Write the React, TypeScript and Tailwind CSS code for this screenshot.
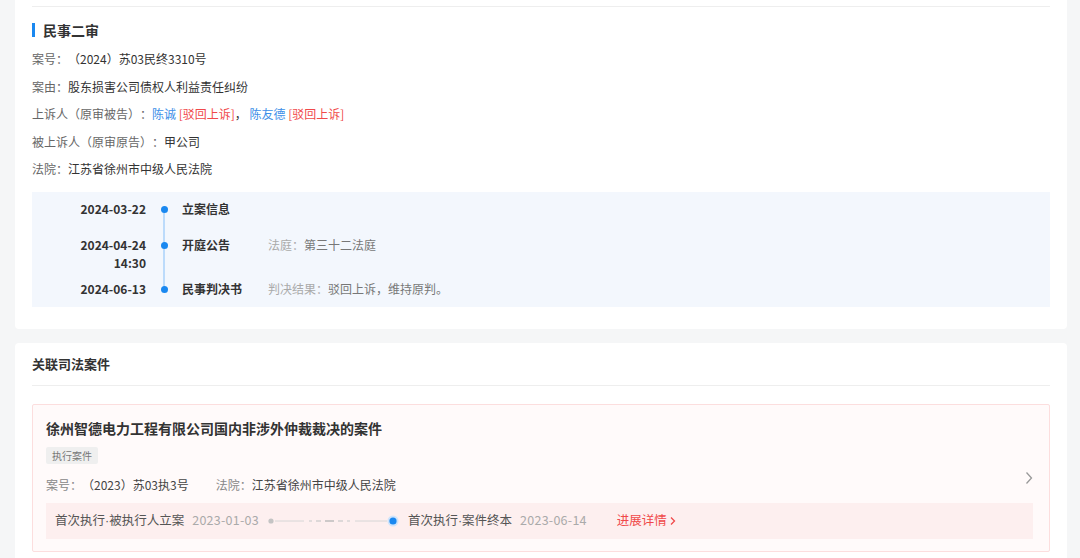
import React from "react";

const font = { fontFamily: '"Noto Sans CJK SC", "Noto Sans", sans-serif' };

function InfoLine({ label, children }: { label: string; children: React.ReactNode }) {
  return (
    <div className="leading-[27.5px] text-[12px] text-[#333]">
      <span className="text-[#666]">{label}</span>
      {children}
    </div>
  );
}

function TimelineRow({
  date,
  time,
  title,
  label,
  value,
  h,
  first,
  last,
}: {
  date: string;
  time?: string;
  title: string;
  label?: string;
  value?: string;
  h: string;
  first?: boolean;
  last?: boolean;
}) {
  return (
    <div className={`flex ${h}`}>
      <div className="w-[114px] text-right text-[12px] font-bold text-[#333] leading-[18px]">
        <div>{date}</div>
        {time && <div>{time}</div>}
      </div>
      <div className="relative w-[36px] flex justify-center">
        <div
          className={`absolute left-1/2 -translate-x-1/2 w-[2px] bg-[#bcdbfb] ${first ? "top-[9px]" : "top-0"} ${last ? "h-[9px]" : "bottom-0"}`}
        />
        <div className="relative mt-[6px] w-[7px] h-[7px] rounded-full bg-[#1a88f0]" />
      </div>
      <div className="w-[86px] text-[12px] font-bold text-[#333] leading-[18px]">{title}</div>
      {label && (
        <div className="text-[12px] leading-[18px]">
          <span className="text-[#aaa]">{label}</span>
          <span className="text-[#777]">{value}</span>
        </div>
      )}
    </div>
  );
}

function ProgressLine() {
  return (
    <svg width="134" height="14" viewBox="0 0 134 14" className="ml-[6px] mr-[9px]">
      <circle cx="6" cy="7" r="2.6" fill="#c4c4c4" />
      <line x1="10" y1="7" x2="39" y2="7" stroke="#d6d6d6" strokeWidth="1" />
      <line x1="44" y1="7" x2="47" y2="7" stroke="#cfcfcf" strokeWidth="1.2" />
      <line x1="51" y1="7" x2="56" y2="7" stroke="#c8c8c8" strokeWidth="1.2" />
      <line x1="60" y1="7" x2="69" y2="7" stroke="#bdbdbd" strokeWidth="1.5" />
      <line x1="73" y1="7" x2="78" y2="7" stroke="#c8c8c8" strokeWidth="1.2" />
      <line x1="82" y1="7" x2="85" y2="7" stroke="#cfcfcf" strokeWidth="1.2" />
      <line x1="90" y1="7" x2="122" y2="7" stroke="#d6d6d6" strokeWidth="1" />
      <circle cx="128" cy="7" r="5.5" fill="#cfe4fb" />
      <circle cx="128" cy="7" r="3.6" fill="#1a88f0" />
    </svg>
  );
}

function Dot() {
  return <span style={{ fontFamily: '"Liberation Sans", sans-serif' }}>·</span>;
}

export default function App() {
  return (
    <div
      style={font}
      className="w-[1080px] h-[558px] overflow-hidden bg-[#f5f6f7] pl-[15px] pr-[13px] [text-spacing-trim:space-all]"
    >
      {/* Card 1 */}
      <div className="bg-white rounded-b-[4px] px-[17px] pb-[22px]">
        <div className="h-[7px] border-b border-[#eeeeee]" />
        <div className="mt-[13px] flex items-center h-[20px]">
          <div className="w-[3px] h-[14px] bg-[#1a88f0]" />
          <div className="ml-[8px] text-[14px] font-bold text-[#333] leading-[20px]">民事二审</div>
        </div>
        <div className="mt-[5px]">
          <InfoLine label="案号：">（2024）苏03民终3310号</InfoLine>
          <InfoLine label="案由：">股东损害公司债权人利益责任纠纷</InfoLine>
          <InfoLine label="上诉人（原审被告）：">
            <span className="text-[#3d8fe8]">陈诚</span>
            <span className="text-[#f0494a]"> [驳回上诉]</span>
            <span>，  </span>
            <span className="text-[#3d8fe8]">陈友德</span>
            <span className="text-[#f0494a]"> [驳回上诉]</span>
          </InfoLine>
          <InfoLine label="被上诉人（原审原告）：">甲公司</InfoLine>
          <InfoLine label="法院：">江苏省徐州市中级人民法院</InfoLine>
        </div>
        <div className="mt-[9px] bg-[#f3f7fd] pt-[8px] pb-[9px]">
          <TimelineRow date="2024-03-22" title="立案信息" h="h-[36px]" first />
          <TimelineRow
            date="2024-04-24"
            time="14:30"
            title="开庭公告"
            label="法庭："
            value="第三十二法庭"
            h="h-[44px]"
          />
          <TimelineRow
            date="2024-06-13"
            title="民事判决书"
            label="判决结果："
            value="驳回上诉，维持原判。"
            h="h-[18px]"
            last
          />
        </div>
      </div>

      {/* Card 2 */}
      <div className="mt-[14px] bg-white rounded-[4px] px-[17px] pb-[20px]">
        <div className="h-[43px] flex items-center border-b border-[#eeeeee] pt-[1px]">
          <div className="text-[13px] font-bold text-[#333]">关联司法案件</div>
        </div>
        <div className="relative mt-[18px] border border-[#fcdede] bg-[#fffafa] rounded-[2px] pl-[13px] pr-[14px] pt-[13px] pb-[12px]">
          <div className="text-[14px] font-bold text-[#333] leading-[20px]">
            徐州智德电力工程有限公司国内非涉外仲裁裁决的案件
          </div>
          <div className="mt-[9px] inline-flex items-center h-[17px] px-[6px] bg-[#efefef] rounded-[2px] text-[10px] text-[#777]">
            执行案件
          </div>
          <div className="mt-[10px] flex items-center h-[20px] text-[12px]">
            <span className="text-[#888]">案号：</span>
            <span className="text-[#444]">（2023）苏03执3号</span>
            <span className="ml-[27px] text-[#888]">法院：</span>
            <span className="text-[#444]">江苏省徐州市中级人民法院</span>
          </div>
          <div className="mt-[8px] h-[36px] mr-[2px] bg-[#fdefef] flex items-center pl-[9px] text-[12.5px]">
            <span className="text-[#555]">
              首次执行<Dot />被执行人立案
            </span>
            <span className="ml-[8px] text-[#aaa] tracking-[0.25px]">2023-01-03</span>
            <ProgressLine />
            <span className="text-[#555]">
              首次执行<Dot />案件终本
            </span>
            <span className="ml-[8px] text-[#aaa] tracking-[0.25px]">2023-06-14</span>
            <span className="ml-[30px] text-[#f0494a] flex items-center">
              进展详情
              <svg width="8" height="10" viewBox="0 0 8 10" className="ml-[2px]">
                <path d="M2 1.5 L5.5 5 L2 8.5" fill="none" stroke="#f0494a" strokeWidth="1.3" />
              </svg>
            </span>
          </div>
          <svg
            width="10"
            height="14"
            viewBox="0 0 10 14"
            className="absolute right-[15px] top-1/2 -translate-y-1/2"
          >
            <path d="M2.5 1.5 L7.5 7 L2.5 12.5" fill="none" stroke="#999" strokeWidth="1.3" />
          </svg>
        </div>
      </div>
    </div>
  );
}
